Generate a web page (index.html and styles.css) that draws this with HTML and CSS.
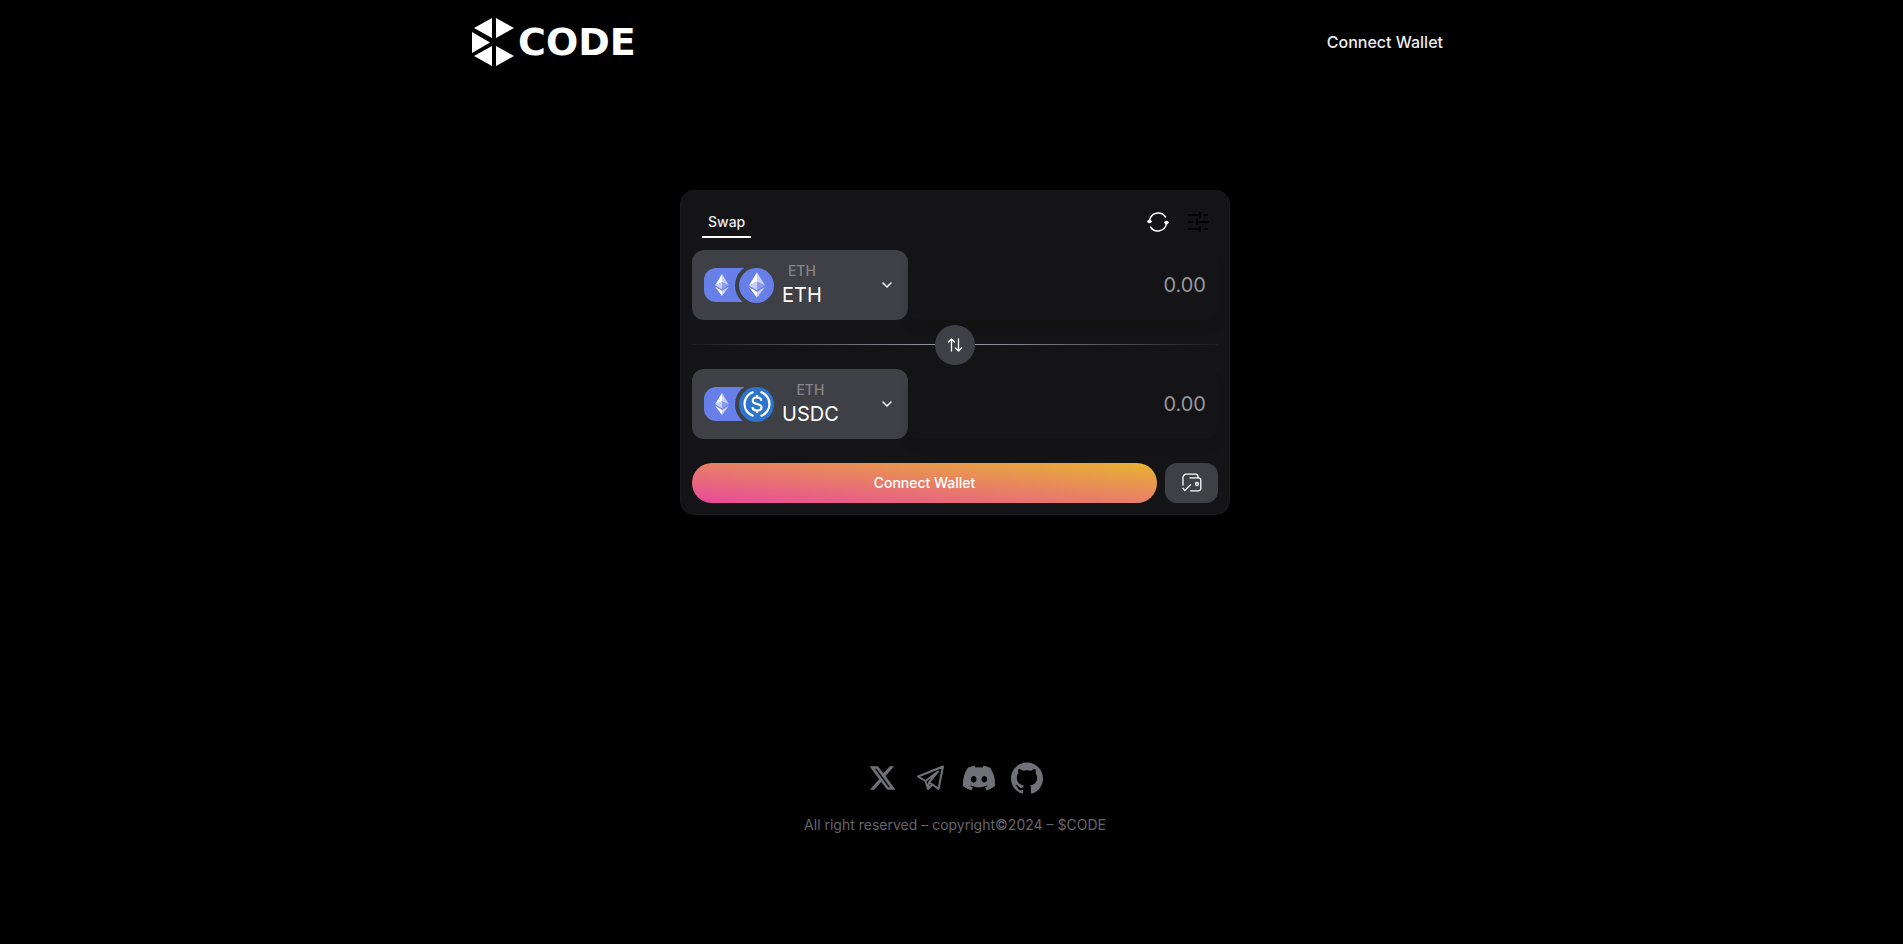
FILE: index.html
```html
<!DOCTYPE html>
<html lang="en">
<head>
<meta charset="utf-8">
<meta name="viewport" content="width=device-width, initial-scale=1">
<title>$CODE Swap</title>
<link rel="stylesheet" href="styles.css">
</head>
<body>
<svg class="sprite" aria-hidden="true">
  <symbol id="eth" viewBox="0 0 20 32">
    <path fill="#fff" d="M10 0 0 16.500 10 12z"/>
    <path fill="#c8d0f7" d="M10 0v12l10 4.500z"/>
    <path fill="#c8d0f7" d="M0 16.500 10 12v10.500z"/>
    <path fill="#8c9df0" d="M20 16.500 10 12v10.500z"/>
    <path fill="#fff" d="M0 18.500 10 24.500V32z"/>
    <path fill="#c8d0f7" d="M20 18.500 10 24.500V32z"/>
  </symbol>
  <symbol id="chevron" viewBox="0 0 12 12">
    <path d="m2 4 4 4 4-4" fill="none" stroke="currentColor" stroke-width="1.500" stroke-linecap="round" stroke-linejoin="round"/>
  </symbol>
</svg>

<header class="header">
  <a class="logo" href="#">
    <svg class="logo-mark" viewBox="0 0 42 50" fill="#fff" aria-hidden="true">
      <path d="M20 1v20L2 11zM24 1l18 10-18 10zM0 15l18 10.500L0 36zM20 29v20L2 39zM24 29l18 10-18 10z"/>
    </svg>
    <span class="logo-text">CODE</span>
  </a>
  <button class="header-connect" type="button">Connect Wallet</button>
</header>

<main class="main">
  <section class="card">
    <div class="card-head">
      <button class="tab" type="button">Swap</button>
      <div class="tools">
        <button class="icon-button" type="button" aria-label="Refresh">
          <svg width="24" height="24" viewBox="0 0 24 24" fill="none" stroke="#fff" stroke-width="1.500" stroke-linecap="round" stroke-linejoin="round">
            <path d="M3.500 10.500a8.800 8.800 0 0 1 16-3.500M20.500 13.500a8.800 8.800 0 0 1-16 3.500"/>
            <path fill="#fff" d="m1.800 11.500 1.700-1.500 1.700 1.500-1.700 1zM18.800 12.500l1.700-1 1.700 1-1.700 1.500z"/>
          </svg>
        </button>
        <button class="icon-button" type="button" aria-label="Settings">
          <svg width="24" height="24" viewBox="0 0 24 24" fill="none" stroke="#000" stroke-width="2">
            <path d="M2 5h13M18 5h4M14 2v6M2 12h5M11 12h12M11 9v6M2 19h13M18 19h4M14 16v6"/>
          </svg>
        </button>
      </div>
    </div>

    <div class="row">
      <button class="token" type="button">
        <span class="badges">
          <span class="chain"><svg width="14" height="22"><use href="#eth"/></svg></span>
          <span class="coin coin-eth"><svg width="16" height="26"><use href="#eth"/></svg></span>
        </span>
        <span class="names"><span class="network">ETH</span><span class="symbol">ETH</span></span>
        <svg class="chevron" width="12" height="12"><use href="#chevron"/></svg>
      </button>
      <input class="amount" type="text" inputmode="decimal" placeholder="0.00" aria-label="Amount to pay">
    </div>

    <div class="divider">
      <button class="flip" type="button" aria-label="Switch tokens">
        <svg width="18" height="18" viewBox="0 0 18 18" fill="none" stroke="#fff" stroke-width="1.300" stroke-linecap="round" stroke-linejoin="round">
          <path d="M5.500 15V3M2.500 6l3-3 3 3M12.500 3v12M9.500 12l3 3 3-3"/>
        </svg>
      </button>
    </div>

    <div class="row">
      <button class="token" type="button">
        <span class="badges">
          <span class="chain"><svg width="14" height="22"><use href="#eth"/></svg></span>
          <span class="coin coin-usdc">
            <svg width="34" height="34" viewBox="0 0 34 34" fill="none" stroke="#fff" stroke-width="2.200">
              <path d="M13.500 5a12.500 12.500 0 0 0 0 24M20.500 5a12.500 12.500 0 0 1 0 24"/>
              <path d="M21.200 13.700c0-2-1.700-3.200-4.200-3.200s-4.200 1.200-4.200 3.200c0 4.600 8.700 2 8.700 6.500 0 2.100-1.900 3.300-4.500 3.300s-4.500-1.300-4.500-3.500M17 8v2.500M17 23.500V26"/>
            </svg>
          </span>
        </span>
        <span class="names"><span class="network">ETH</span><span class="symbol">USDC</span></span>
        <svg class="chevron" width="12" height="12"><use href="#chevron"/></svg>
      </button>
      <input class="amount" type="text" inputmode="decimal" placeholder="0.00" aria-label="Amount to receive">
    </div>

    <div class="actions">
      <button class="connect" type="button">Connect Wallet</button>
      <button class="receiver" type="button" aria-label="Set receiving wallet">
        <svg width="20" height="20" viewBox="0 0 20 20" fill="none" stroke="#fff" stroke-width="1.300" stroke-linecap="round" stroke-linejoin="round">
          <path d="M1 12V4.500A3.300 3.300 0 0 1 4.300 1.200h9.200A2.500 2.500 0 0 1 16 3.700v1.100M8 4.800h8.300a2.500 2.500 0 0 1 2.500 2.500v8a2.500 2.500 0 0 1-2.500 2.500H8.500M1 15.300 2.800 17.600 8.500 11.800"/>
          <circle cx="15" cy="11" r="1.500"/>
        </svg>
      </button>
    </div>
  </section>
</main>

<footer class="footer">
  <nav class="social" aria-label="Social">
    <a href="#" aria-label="X"><svg width="32" height="32" viewBox="0 0 32 32" fill="currentColor" stroke="currentColor" stroke-width=".5"><path transform="translate(3 3.500)" d="M19.800 1h3.800l-8.400 9.600L25 24h-7.700l-6.100-8L4.200 24H.4l9-10.300L0 1h7.900l5.500 7.300zm-1.400 20.900h2.100L6.700 3H4.400z"/></svg></a>
    <a href="#" aria-label="Telegram"><svg width="32" height="32" viewBox="0 0 32 32" fill="none" stroke="currentColor" stroke-width="2" stroke-linejoin="round"><path d="M28 4.500 3 14.500l7.500 4.500 2.500 8 4.500-4.500 6 4.500zM10.500 19 23 9.500 14 20.500l-1 6.500M14 20.500l3.500 2"/></svg></a>
    <a href="#" aria-label="Discord"><svg width="32" height="32" viewBox="0 0 24 24" fill="currentColor"><path d="M20.317 4.370a19.800 19.800 0 0 0-4.885-1.515.074.074 0 0 0-.079.037c-.21.375-.444.864-.608 1.250a18.270 18.270 0 0 0-5.487 0 12.640 12.640 0 0 0-.617-1.250.077.077 0 0 0-.079-.037A19.740 19.740 0 0 0 3.677 4.370a.07.07 0 0 0-.032.027C.533 9.046-.32 13.580.099 18.057a.082.082 0 0 0 .031.057 19.900 19.900 0 0 0 5.993 3.030.078.078 0 0 0 .084-.028 14.090 14.090 0 0 0 1.226-1.994.076.076 0 0 0-.041-.106 13.107 13.107 0 0 1-1.872-.892.077.077 0 0 1-.008-.128c.126-.094.252-.192.372-.292a.074.074 0 0 1 .077-.01c3.928 1.793 8.180 1.793 12.062 0a.074.074 0 0 1 .078.010c.12.098.246.198.373.292a.077.077 0 0 1-.006.127 12.299 12.299 0 0 1-1.873.892.077.077 0 0 0-.041.107c.36.698.772 1.362 1.225 1.993a.076.076 0 0 0 .084.028 19.839 19.839 0 0 0 6.002-3.030.077.077 0 0 0 .032-.054c.5-5.177-.838-9.674-3.549-13.660a.061.061 0 0 0-.031-.030zM8.020 15.330c-1.183 0-2.157-1.085-2.157-2.419 0-1.333.956-2.419 2.157-2.419 1.210 0 2.176 1.096 2.157 2.420 0 1.333-.956 2.418-2.157 2.418zm7.975 0c-1.183 0-2.157-1.085-2.157-2.419 0-1.333.955-2.419 2.157-2.419 1.210 0 2.176 1.096 2.157 2.420 0 1.333-.946 2.418-2.157 2.418z"/></svg></a>
    <a href="#" aria-label="GitHub"><svg width="32" height="32" viewBox="0 0 24 24" fill="currentColor"><path d="M12 .297c-6.630 0-12 5.373-12 12 0 5.303 3.438 9.800 8.205 11.385.6.113.82-.258.82-.577 0-.285-.010-1.040-.015-2.040-3.338.724-4.042-1.610-4.042-1.610C4.422 18.070 3.633 17.700 3.633 17.700c-1.087-.744.084-.729.084-.729 1.205.084 1.838 1.236 1.838 1.236 1.070 1.835 2.809 1.305 3.495.998.108-.776.417-1.305.76-1.605-2.665-.3-5.466-1.332-5.466-5.930 0-1.310.465-2.380 1.235-3.220-.135-.303-.54-1.523.105-3.176 0 0 1.005-.322 3.300 1.230.96-.267 1.980-.399 3-.405 1.020.006 2.040.138 3 .405 2.280-1.552 3.285-1.230 3.285-1.230.645 1.653.24 2.873.12 3.176.765.84 1.230 1.910 1.230 3.220 0 4.610-2.805 5.625-5.475 5.920.42.360.81 1.096.81 2.220 0 1.606-.015 2.896-.015 3.286 0 .315.210.690.825.570C20.565 22.092 24 17.592 24 12.297c0-6.627-5.373-12-12-12"/></svg></a>
  </nav>
  <p class="copyright">All right reserved – copyright©2024 – $CODE</p>
</footer>
</body>
</html>
```

FILE: styles.css
```css
* {
  box-sizing: border-box;
}

body {
  margin: 0;
  padding-left: 7px;
  min-height: 100vh;
  background: #000;
  color: #ececee;
  font-family: Inter, "Liberation Sans", sans-serif;
}

button {
  padding: 0;
  border: 0;
  background: none;
  color: inherit;
  font: inherit;
  cursor: pointer;
}

svg {
  display: block;
}

.sprite {
  position: absolute;
  width: 0;
  height: 0;
}

.header {
  display: flex;
  align-items: center;
  justify-content: space-between;
  max-width: 1024px;
  height: 84px;
  margin: 0 auto;
  padding: 0 24px 0 29px;
}

.logo {
  display: flex;
  align-items: center;
  gap: 4px;
  color: #fff;
  text-decoration: none;
}

.logo-mark {
  width: 42px;
  height: 50px;
}

.logo-text {
  font: 700 38px/48px "DejaVu Sans", sans-serif;
}

.header-connect {
  font-size: 16px;
  font-weight: 500;
  line-height: 24px;
}

.main {
  display: flex;
  justify-content: center;
  padding: 106px 16px 0;
}

.card {
  width: 100%;
  max-width: 550px;
  padding: 11px;
  border: 1px solid #19191b;
  border-radius: 14px;
  background: #141416;
}

.card-head {
  display: flex;
  align-items: center;
  justify-content: space-between;
  height: 48px;
  padding: 0 8px 0 10px;
}

.tab {
  align-self: flex-end;
  height: 32px;
  margin-bottom: 12px;
  padding: 0 6px;
  border-bottom: 2px solid #fff;
  font-size: 14px;
  font-weight: 500;
  line-height: 32px;
}

.tools {
  display: flex;
  gap: 16px;
  padding-bottom: 8px;
}

.row {
  display: flex;
}

.token {
  display: flex;
  align-items: center;
  flex: 0 0 216px;
  height: 70px;
  padding: 0 12px;
  border-radius: 12px;
  background: #3f3f46;
}

.badges {
  display: flex;
  align-items: center;
}

.chain {
  display: flex;
  align-items: center;
  width: 40px;
  height: 34px;
  padding-left: 11px;
  border-radius: 12px 0 0 12px;
  background: #677fe8;
}

.coin {
  display: flex;
  align-items: center;
  justify-content: center;
  width: 35px;
  height: 35px;
  margin-left: -5px;
  border-radius: 50%;
  box-shadow: 0 0 0 4px #3f3f46;
}

.coin-eth {
  background: #677fe8;
}

.coin-usdc {
  background: #2f74cb;
}

.names {
  display: flex;
  flex-direction: column;
  align-items: center;
  margin-left: 8px;
}

.network {
  color: #85858b;
  font-size: 14px;
  font-weight: 500;
  line-height: 20px;
}

.symbol {
  color: #fff;
  font-size: 20px;
  line-height: 28px;
}

.chevron {
  margin-left: auto;
  margin-right: 3px;
  color: #fff;
}

.amount {
  flex: 1;
  min-width: 0;
  padding: 0 12px;
  border: 0;
  border-radius: 12px;
  background: #141416;
  box-shadow: 0 8px 12px -6px #121213;
  color: #fff;
  font: 400 20px/28px Inter, "Liberation Sans", sans-serif;
  text-align: right;
  outline: none;
}

.amount::placeholder {
  color: #96969d;
  opacity: 1;
}

.divider {
  display: flex;
  align-items: center;
  justify-content: center;
  height: 49px;
}

.divider::before,
.divider::after {
  content: "";
  flex: 1;
  height: 1px;
  background: linear-gradient(90deg, #1c1c1f, #96969f);
}

.divider::after {
  background: linear-gradient(270deg, #1c1c1f, #96969f);
}

.flip {
  display: flex;
  align-items: center;
  justify-content: center;
  width: 40px;
  height: 40px;
  border-radius: 50%;
  background: #3f3f46;
}

.actions {
  display: flex;
  gap: 8px;
  margin-top: 24px;
}

.connect {
  flex: 1;
  height: 40px;
  border-radius: 20px;
  background: linear-gradient(to top right, #e84a9b, #e8b430);
  color: #fff;
  font-size: 14px;
  font-weight: 500;
  line-height: 20px;
}

.receiver {
  display: flex;
  align-items: center;
  justify-content: center;
  width: 53px;
  height: 40px;
  border-radius: 12px;
  background: #3f3f46;
}

.footer {
  padding: 247px 16px 32px;
  color: #71717a;
}

.social {
  display: flex;
  justify-content: center;
  gap: 16px;
}

.social a {
  color: inherit;
}

.copyright {
  margin: 19px 0 0;
  color: #65656d;
  font-size: 14px;
  line-height: 24px;
  text-align: center;
}
```
